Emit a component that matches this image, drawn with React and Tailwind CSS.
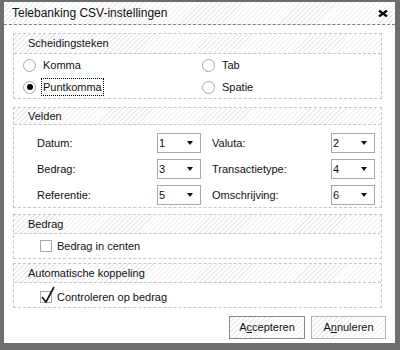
import React from "react";

const hatch =
  "bg-[repeating-linear-gradient(135deg,#ededed_0px,#ededed_1px,#ffffff_1px,#ffffff_3.5px)]";

function Radio({ label, checked, focused }) {
  return (
    <div className="flex items-center h-[20px] gap-[6px]">
      <div className="w-[13px] h-[13px] rounded-full border border-[#a8a8a8] bg-white flex items-center justify-center">
        {checked && <div className="w-[6px] h-[6px] rounded-full bg-black" />}
      </div>
      <span
        className={
          focused
            ? "outline outline-1 outline-dotted outline-black px-[1px] leading-[16px]"
            : "px-[1px] leading-[16px]"
        }
      >
        {label}
      </span>
    </div>
  );
}

function Select({ value }) {
  return (
    <div className="w-[44px] h-[20px] border border-[#a8a8a8] bg-white flex items-center justify-between pl-[1px] pr-[7px]">
      <span className="leading-none">{value}</span>
      <svg width="6" height="4" viewBox="0 0 6 4">
        <path d="M0 0h6L3 4z" fill="#111" />
      </svg>
    </div>
  );
}

function Check({ label, checked }) {
  return (
    <div className="flex items-center gap-[5px] pl-[26px]">
      <div className="relative w-[12px] h-[12px] border border-[#a8a8a8] bg-white">
        {checked && (
          <svg
            className="absolute -left-[1px] -top-[6px]"
            width="16"
            height="18"
            viewBox="0 0 16 18"
          >
            <path
              d="M2 11 L6 16 L14 1"
              stroke="#111"
              strokeWidth="1.6"
              fill="none"
            />
          </svg>
        )}
      </div>
      <span>{label}</span>
    </div>
  );
}

function Group({ title, headerH, children, className }) {
  return (
    <div className={"border border-dashed border-[#c8c8c8] " + className}>
      <div
        className={
          "flex items-center pl-[14px] border-b border-dashed border-[#c8c8c8] " +
          hatch +
          " " +
          headerH
        }
      >
        {title}
      </div>
      {children}
    </div>
  );
}

export default function App() {
  return (
    <div
      className="w-[400px] h-[350px] bg-[#6e6e6e] pt-[2px] pl-[4px] pr-[5px] pb-[7px] text-[11px] text-[#111]"
      style={{ fontFamily: '"Liberation Sans", Arial, sans-serif' }}
    >
      <div className="w-full h-full bg-white flex flex-col">
        <div
          className={
            "h-[23px] flex items-center justify-between pl-[8px] pr-[7px] border-b border-dashed border-[#808080] text-[12px] " +
            hatch
          }
        >
          <span>Telebanking CSV-instellingen</span>
          <svg width="10" height="7" viewBox="0 0 10 7">
            <path d="M1 0.5 L9 6.5 M9 0.5 L1 6.5" stroke="#000" strokeWidth="2.2" />
          </svg>
        </div>

        <div className="flex flex-col pl-[9px] pr-[13px] pt-[8px]">
          <Group title="Scheidingsteken" headerH="h-[20px]" className="">
            <div className="grid grid-cols-[179px_1fr] pl-[9px] pt-[1px] pb-[1px] gap-y-[2px]">
              <Radio label="Komma" />
              <Radio label="Tab" />
              <Radio label="Puntkomma" checked focused />
              <Radio label="Spatie" />
            </div>
          </Group>

          <Group title="Velden" headerH="h-[17px]" className="mt-[8px]">
            <div className="grid grid-cols-[120px_44px_11px_119px_44px] items-center pl-[23px] pt-[8px] pb-[2px] gap-y-[6px]">
              <span>Datum:</span>
              <Select value="1" />
              <span />
              <span>Valuta:</span>
              <Select value="2" />
              <span>Bedrag:</span>
              <Select value="3" />
              <span />
              <span>Transactietype:</span>
              <Select value="4" />
              <span>Referentie:</span>
              <Select value="5" />
              <span />
              <span>Omschrijving:</span>
              <Select value="6" />
            </div>
          </Group>

          <Group title="Bedrag" headerH="h-[19px]" className="mt-[6px]">
            <div className="h-[24px] flex items-center">
              <Check label="Bedrag in centen" />
            </div>
          </Group>

          <Group title="Automatische koppeling" headerH="h-[19px]" className="mt-[4px]">
            <div className="h-[24px] flex items-center pt-[4px]">
              <Check label="Controleren op bedrag" checked />
            </div>
          </Group>

          <div className="flex justify-end gap-[6px] mt-[8px] -mr-[4px]">
            <button
              className={
                "w-[76px] h-[23px] border border-[#8a8a8a] flex items-center justify-center " +
                hatch
              }
            >
              A<span className="underline">c</span>cepteren
            </button>
            <button
              className={
                "w-[75px] h-[23px] border border-[#b4b4b4] flex items-center justify-center " +
                hatch
              }
            >
              A<span className="underline">n</span>nuleren
            </button>
          </div>
        </div>
      </div>
    </div>
  );
}
